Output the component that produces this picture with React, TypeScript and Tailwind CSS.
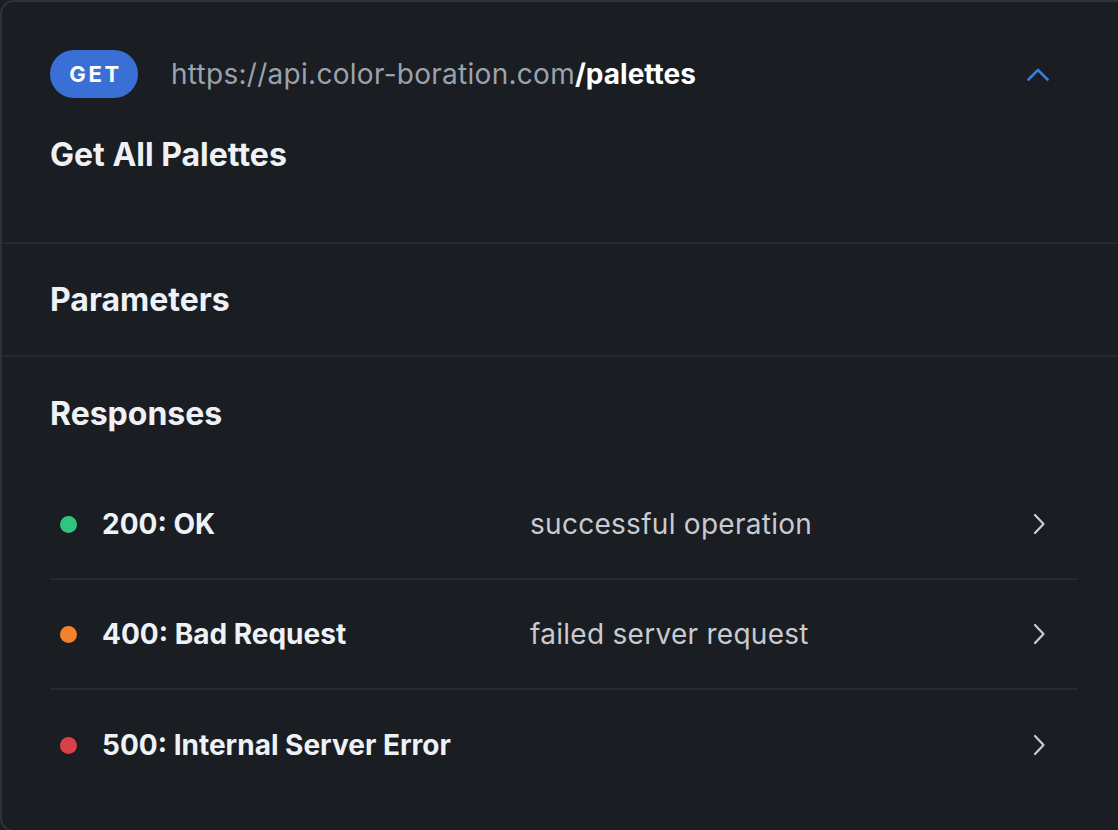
import React from 'react';

interface ResponseRow {
  code: string;
  description: string;
  dot: string;
}

const responses: ResponseRow[] = [
  { code: '200: OK', description: 'successful operation', dot: 'bg-[#2fc47f]' },
  { code: '400: Bad Request', description: 'failed server request', dot: 'bg-[#f5812a]' },
  { code: '500: Internal Server Error', description: '', dot: 'bg-[#d9404a]' },
];

const ChevronUp = () => (
  <svg width="22" height="13" viewBox="0 0 22 13" fill="none">
    <polyline points="1.5,11.5 11,2 20.5,11.5" stroke="#3b7ddd" strokeWidth="2.6" strokeLinecap="round" strokeLinejoin="round" />
  </svg>
);

const ChevronRight = () => (
  <svg width="14" height="22" viewBox="0 0 14 22" fill="none">
    <polyline points="3,2 11.5,11 3,20" stroke="#c9cdd3" strokeWidth="2.2" strokeLinecap="round" strokeLinejoin="round" />
  </svg>
);

export default function App() {
  return (
    <div className="w-[1118px] h-[830px] overflow-hidden bg-[#1a1d21]" style={{ fontFamily: 'Inter, "Noto Sans", sans-serif' }}>
      <div className="w-[1140px] h-[832px] rounded-tl-[14px] rounded-bl-[14px] border-l-2 border-t-2 border-b-2 border-[#2e3139] bg-[#1a1d21]">
        {/* Header */}
        <div className="px-[48px] pt-[48px] pb-[68px] border-b-2 border-[#25282e]">
          <div className="flex items-center w-[1000px]">
            <span className="inline-flex items-center justify-center w-[88px] h-[48px] rounded-full bg-[#3a70d6] text-white text-[22px] font-bold tracking-[0.12em] pl-[3px]">
              GET
            </span>
            <span className="ml-[33px] text-[28px] leading-[36px] tracking-[0.01em] text-[#9ba2af]">
              https://api.color-boration.com<span className="font-bold tracking-normal text-white">/palettes</span>
            </span>
            <span className="ml-auto mr-[1px] flex items-center">
              <ChevronUp />
            </span>
          </div>
          <h1 className="mt-[38px] text-[32px] leading-[38px] font-bold text-[#eef2f6]">Get All Palettes</h1>
        </div>

        {/* Parameters */}
        <div className="px-[48px] h-[113px] flex items-center border-b-2 border-[#25282e]">
          <h2 className="text-[32px] leading-[38px] font-bold text-[#eef2f6]">Parameters</h2>
        </div>

        {/* Responses */}
        <div className="px-[48px]">
          <div className="h-[113px] flex items-center">
            <h2 className="text-[32px] leading-[38px] font-bold text-[#eef2f6]">Responses</h2>
          </div>
          <div className="w-[1028px]">
            {responses.map((r, i) => (
              <div
                key={r.code}
                className={`h-[110px] flex items-center ${i < responses.length - 1 ? 'border-b-2 border-[#25282e]' : ''}`}
              >
                <span className={`ml-[10px] w-[17px] h-[17px] rounded-full ${r.dot}`} />
                <span className="ml-[25px] w-[428px] text-[28px] font-bold text-[#eef2f6]">{r.code}</span>
                <span className="text-[28px] tracking-[0.01em] text-[#c8cbd1]">{r.description}</span>
                <span className="ml-auto mr-[32px] flex items-center">
                  <ChevronRight />
                </span>
              </div>
            ))}
          </div>
        </div>
      </div>
    </div>
  );
}
